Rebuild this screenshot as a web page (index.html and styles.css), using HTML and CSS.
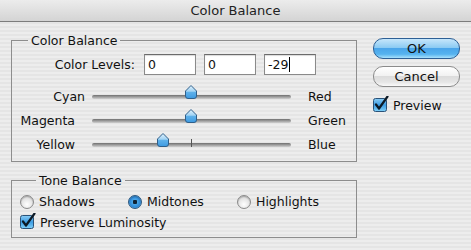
FILE: index.html
```html
<!DOCTYPE html>
<html>
<head>
   <meta charset="utf-8">
   <title>Color Balance</title>
   <link rel="stylesheet" href="styles.css">
</head>
<body>
   <div class="titlebar">Color Balance</div>
   <div class="content">
      <div class="main">
         <fieldset class="group balance">
            <legend>Color Balance</legend>
            <div class="levels">
               <span class="levels-label">Color Levels:</span>
               <div class="field">0</div>
               <div class="field">0</div>
               <div class="field">-29<span class="caret"></span></div>
            </div>

            <div class="slider-row">
               <span class="slider-label">Cyan</span>
               <div class="track">
                  <svg class="thumb" style="left:93px" width="12" height="14" viewBox="0 0 12 14"><use href="#thumb"/></svg>
               </div>
               <span class="slider-end">Red</span>
            </div>
            <div class="slider-row">
               <span class="slider-label short">Magenta</span>
               <div class="track">
                  <svg class="thumb" style="left:93px" width="12" height="14" viewBox="0 0 12 14"><use href="#thumb"/></svg>
               </div>
               <span class="slider-end">Green</span>
            </div>
            <div class="slider-row">
               <span class="slider-label short">Yellow</span>
               <div class="track">
                  <span class="tick"></span>
                  <svg class="thumb" style="left:65px" width="12" height="14" viewBox="0 0 12 14"><use href="#thumb"/></svg>
               </div>
               <span class="slider-end">Blue</span>
            </div>
         </fieldset>

         <fieldset class="group tone">
            <legend>Tone Balance</legend>
            <div class="radios">
               <span class="option"><span class="radio"></span>Shadows</span>
               <span class="option"><span class="radio on"></span>Midtones</span>
               <span class="option"><span class="radio"></span>Highlights</span>
            </div>
            <div class="option check-row">
               <svg class="check" width="16" height="16" viewBox="0 0 16 16"><use href="#checkbox"/></svg>Preserve Luminosity
            </div>
         </fieldset>
      </div>

      <div class="side">
         <div class="button default">OK</div>
         <div class="button">Cancel</div>
         <div class="option preview">
            <svg class="check" width="16" height="16" viewBox="0 0 16 16"><use href="#checkbox"/></svg>Preview
         </div>
      </div>
   </div>

   <svg width="0" height="0" class="defs">
      <defs>
         <linearGradient id="aqua" x1="0" y1="0" x2="0" y2="1">
            <stop offset="0" stop-color="#e4f3fd"/>
            <stop offset="0.45" stop-color="#9fd2f3"/>
            <stop offset="0.5" stop-color="#5fb1ea"/>
            <stop offset="1" stop-color="#3d9be2"/>
         </linearGradient>
         <linearGradient id="aqua-box" x1="0" y1="0" x2="0" y2="1">
            <stop offset="0" stop-color="#8ccdf4"/>
            <stop offset="0.5" stop-color="#3d9de4"/>
            <stop offset="1" stop-color="#7fd0f8"/>
         </linearGradient>
         <path id="thumb" d="M6 0.5 L11.5 6 V11 Q11.5 13.5 9 13.5 H3 Q0.5 13.5 0.5 11 V6 Z" fill="url(#aqua)" stroke="#2f5f8a" stroke-width="1"/>
         <g id="checkbox">
            <rect x="0.5" y="2.5" width="13" height="13" rx="2" fill="url(#aqua-box)" stroke="#2a5278"/>
            <path d="M3 8.5 L6 12.5 L14.5 0.5" fill="none" stroke="#0c1a26" stroke-width="2.2" stroke-linecap="round" stroke-linejoin="round"/>
         </g>
      </defs>
   </svg>
</body>
</html>
```

FILE: styles.css
```css
body{
   margin: 0;
   width: 471px;
   height: 250px;
   overflow: hidden;
   font-family: "DejaVu Sans", sans-serif;
   font-size: 12px;
   color: #111;
   background: repeating-linear-gradient(#ededed 0 2px, #e5e5e5 2px 4px);
}

.defs{
   position: absolute;
}

.titlebar{
   height: 21px;
   line-height: 21px;
   text-align: center;
   font-size: 13px;
   color: #222;
   background: linear-gradient(#ececec, #d4d4d4);
   border-bottom: 1px solid #7d7d7d;
}

.content{
   display: flex;
   padding-top: 11px;
}

.main{
   width: 346px;
   margin-left: 11px;
}

fieldset.group{
   margin: 0;
   padding: 0;
   border: 1px solid #8d8d8d;
}

fieldset.group legend{
   margin-left: 16px;
   padding: 0 3px;
   line-height: 15px;
   font-size: 12.5px;
}

/* color levels */
.levels{
   display: flex;
   align-items: center;
   height: 21px;
   margin-top: 6px;
}

.levels-label{
   width: 123px;
   margin-right: 9px;
   text-align: right;
   font-size: 12.5px;
}

.field{
   width: 47px;
   height: 19px;
   line-height: 19px;
   padding-left: 3px;
   margin-right: 8px;
   background: #fff;
   border: 1px solid #8a8a8a;
   border-top-color: #6b6b6b;
   box-shadow: inset 0 1px 1px rgba(0,0,0,0.15);
   font-size: 12.5px;
}

.caret{
   display: inline-block;
   width: 1px;
   height: 15px;
   margin-left: 1px;
   vertical-align: -3px;
   background: #000;
}

/* sliders */
.balance{
   padding-bottom: 5px !important;
}

.slider-row{
   display: flex;
   align-items: center;
   height: 24px;
}

.levels + .slider-row{
   margin-top: 9px;
}

.slider-label{
   width: 73px;
   text-align: right;
   font-size: 12.5px;
}

.slider-label.short{
   width: 63px;
   padding-right: 10px;
}

.track{
   position: relative;
   width: 199px;
   height: 4px;
   margin-left: 7px;
   margin-top: 2px;
   border-radius: 2px;
   background: linear-gradient(#6f6f6f, #a9a9a9 60%, #d0d0d0);
}

.thumb{
   position: absolute;
   top: -10px;
}

.tick{
   position: absolute;
   left: 99px;
   top: -4px;
   width: 1px;
   height: 8px;
   background: #555;
}

.slider-end{
   margin-left: 17px;
   font-size: 12.5px;
}

/* tone balance */
.tone{
   margin-top: 11px !important;
   padding: 3px 0 4px 8px !important;
}

.radios{
   display: grid;
   grid-template-columns: 108px 109px 100px;
   height: 21px;
   align-items: center;
}

.option{
   display: flex;
   align-items: center;
   font-size: 12.5px;
}

.radio{
   width: 12px;
   height: 12px;
   margin-right: 5px;
   border-radius: 50%;
   border: 1px solid #8a8a8a;
   background: radial-gradient(circle at 50% 70%, #ffffff, #e4e4e4 55%, #bdbdbd);
   box-shadow: inset 0 1px 1px rgba(0,0,0,0.2);
}

.radio.on{
   border-color: #2c577e;
   background: radial-gradient(circle, #0f2335 0 2px, #4aa6e6 2.5px, #2f8ad8 60%, #9ad6fa);
}

.check-row{
   height: 21px;
}

.check{
   margin-right: 4px;
   margin-top: -3px;
}

/* buttons */
.side{
   width: 87px;
   margin-left: 16px;
   padding-top: 5px;
}

.button{
   height: 19px;
   line-height: 19px;
   text-align: center;
   border-radius: 10px;
   border: 1px solid #8b8b8b;
   background: linear-gradient(#ffffff, #f2f2f2 45%, #dcdcdc 50%, #e6e6e6 80%, #fafafa);
   font-size: 13px;
   margin-bottom: 7px;
}

.button.default{
   border-color: #2d5f95;
   background: linear-gradient(#c6e6fb, #8ccbf3 45%, #4aa5ea 50%, #56b3ef 80%, #a9e1fc);
}

.preview{
   margin-top: 10px;
   height: 16px;
}
```
